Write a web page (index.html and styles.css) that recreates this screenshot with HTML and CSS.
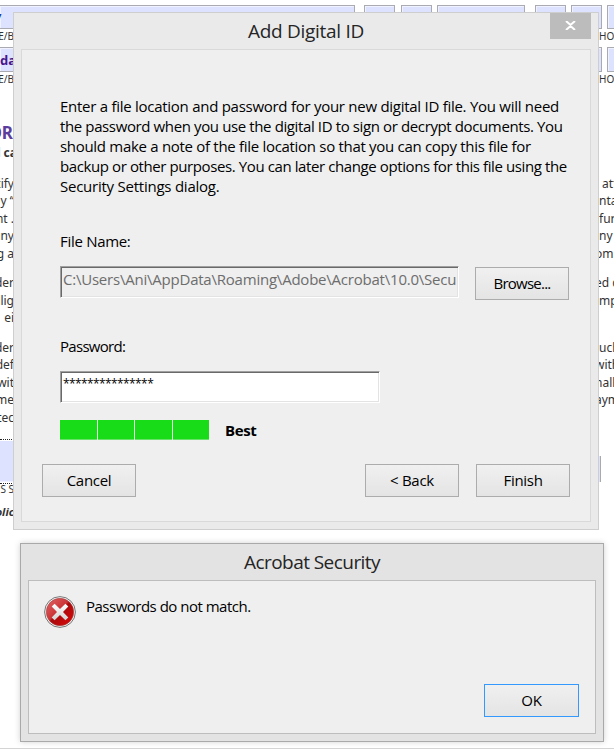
FILE: index.html
```html
<!DOCTYPE html>
<html lang="en">
<head>
<meta charset="utf-8">
<title>Add Digital ID</title>
<link rel="stylesheet" href="styles.css">
</head>
<body>
<main class="desktop">
  <div class="document">
    <div class="fields fields-top">
      <div class="field wide"><b>y</b></div><div class="field f1"></div><div class="field f2"></div><div class="field f3"></div><div class="field f4"></div><div class="field f5"></div><div class="field f6"></div>
    </div>
    <div class="line caption"><span class="l">E/B</span><span class="r">HO</span></div>
    <div class="fields">
      <div class="field wide"><b>da</b></div><div class="field f1"></div><div class="field f2"></div><div class="field f3"></div><div class="field f4"></div><div class="field f5"></div><div class="field f6"></div>
    </div>
    <div class="line caption"><span class="l">E/B</span><span class="r">HO</span></div>
    <div class="line heading"><span class="l">OR</span></div>
    <div class="line strong"><span class="l lead">d ca</span></div>
    <div class="para first">
      <div class="line"><span class="l">tify</span><span class="r">&nbsp;att</span></div>
      <div class="line"><span class="l">y “</span><span class="r">ntai</span></div>
      <div class="line"><span class="l">nt .</span><span class="r">furt</span></div>
      <div class="line"><span class="l">any</span><span class="r">ny</span></div>
      <div class="line"><span class="l">g a</span><span class="r cut">omp</span></div>
    </div>
    <div class="para">
      <div class="line"><span class="l">der</span><span class="r cut">ed c</span></div>
      <div class="line"><span class="l">lig</span><span class="r">mpl</span></div>
      <div class="line"><span class="l ei">ei</span></div>
    </div>
    <div class="para">
      <div class="line"><span class="l">der</span><span class="r">uch</span></div>
      <div class="line"><span class="l">def</span><span class="r cut">with</span></div>
      <div class="line"><span class="l">wit</span><span class="r cut">hall</span></div>
      <div class="line"><span class="l">me</span><span class="r cut">aym</span></div>
      <div class="line"><span class="l">tec</span></div>
    </div>
    <div class="signature"><div class="sign-left"></div><div class="sign-right"></div></div>
    <div class="line caption sign-caption"><span class="l">S S</span></div>
    <div class="line strong italic"><span class="l">olic</span></div>
  </div>

  <section class="window id-window">
    <header class="title">Add Digital ID</header>
    <button class="close" aria-label="Close"><svg width="11" height="9" viewBox="0 0 11 9"><path d="M1 0 5.500 4 10 0M1 9 5.500 5 10 9M5.500 3.500v2" fill="none" stroke="#fff" stroke-width="2"/></svg></button>
    <div class="panel id-panel">
      <p class="intro"><span class="t1">Enter a file location and password for your new digital ID file. You will need</span><span class="t2">the password when you use the digital ID to sign or decrypt documents. You</span><span class="t3">should make a note of the file location so that you can copy this file for</span><span class="t4">backup or other purposes. You can later change options for this file using the</span><span class="t5">Security Settings dialog.</span></p>
      <div class="label name-label">File Name:</div>
      <div class="file-row"><div class="input disabled"><span class="path">C:\Users\Ani\AppData\Roaming\Adobe\Acrobat\10.0\Secu</span></div><button class="btn browse">Browse...</button></div>
      <div class="label pass-label">Password:</div>
      <div class="input pass"><span>***************</span></div>
      <div class="strength"><div class="meter"><i></i><i></i><i></i><i></i></div><b>Best</b></div>
      <footer class="actions"><button class="btn">Cancel</button><button class="btn back">&lt; Back</button><button class="btn">Finish</button></footer>
    </div>
  </section>

  <section class="window alert-window">
    <header class="title">Acrobat Security</header>
    <div class="panel alert-panel">
      <div class="message">
        <svg width="32" height="32" viewBox="0 0 32 32">
          <defs>
            <linearGradient id="red" x1="0" y1="0" x2="1" y2="1"><stop offset="0" stop-color="#e0686a"/><stop offset=".45" stop-color="#cc3436"/><stop offset=".5" stop-color="#a90a0c"/><stop offset="1" stop-color="#e00808"/></linearGradient>
            <linearGradient id="white" x1="0" y1="0" x2="0" y2="1"><stop offset="0" stop-color="#fff"/><stop offset="1" stop-color="#d2d2d2"/></linearGradient>
          </defs>
          <circle cx="16" cy="16" r="15.400" fill="#f4f4f4" stroke="#777" stroke-width="1"/>
          <circle cx="16" cy="16" r="13.700" fill="url(#red)" stroke="#9d4141" stroke-width=".6"/>
          <path d="M10.600 7.800 16 13.100l5.400-5.300 2.900 2.800L19 16l5.300 5.400-2.900 2.800L16 18.900l-5.400 5.300-2.900-2.800L13 16l-5.300-5.400z" fill="url(#white)"/>
        </svg>
        <span>Passwords do not match.</span>
      </div>
      <button class="btn ok">OK</button>
    </div>
  </section>
</main>
</body>
</html>
```
FILE: styles.css
```css
* { box-sizing: border-box; }
body { margin: 0; background: #fff; color: #000; font: 15px/20px "Open Sans", "Noto Sans", sans-serif; }
.desktop { position: relative; width: 614px; height: 749px; overflow: hidden; border-bottom: 1px solid #d4d4d4; }

.document { padding-top: 5px; font: 12px/17.6px "Noto Sans", sans-serif; color: #333; }
.fields { display: flex; height: 25px; }
.fields-top { height: 24px; }
.field { flex: none; border: 1px solid #aaaab2; background: #dde2ff; width: 31px; box-shadow: inset 1px 1px #f0f2ff; }
.wide { width: 355px; border-left: 0; color: #4a168c; font-size: 13px; line-height: 24px; }
.fields-top .wide { color: #2638a8; line-height: 20px; }
.fields-top .wide b { margin-left: -6px; }
.f1 { margin-left: 9px; }
.f2 { margin-left: 6px; }
.f3 { margin-left: 5px; width: 88px; }
.f4 { margin-left: 10px; }
.f5 { margin-left: 5px; }
.f6 { margin-left: 5px; }
.line { display: flex; justify-content: space-between; height: 17.500px; white-space: nowrap; }
.l { display: flex; justify-content: flex-end; width: 14px; }
.lead { width: 17px; }
.r { width: 15px; overflow: hidden; }
.cut { text-indent: -4px; }
.caption { height: 18px; font-size: 10px; line-height: 14px; }
.heading { height: 22px; margin-top: 32px; color: #5c3c9c; font-size: 17px; line-height: 22px; font-weight: 700; }
.heading .l { width: 13px; }
.strong { font-weight: 700; }
.first { margin-top: 13px; }
.para + .para { margin-top: 12px; }
.signature { display: flex; justify-content: space-between; align-items: flex-end; height: 45px; margin-top: 13px; }
.sign-left { width: 14px; height: 45px; border-top: 1px dotted #222; border-bottom: 1px dotted #222; background: linear-gradient(#fff 1px, #dde2ff 1px, #dde2ff 41px, #fff 42px); }
.sign-right { width: 15px; height: 26px; margin-bottom: 2px; background: linear-gradient(90deg, #dde2ff 1px, #aaa 1px, #aaa 2px, #fff 2px); }
.sign-caption { height: 19px; line-height: 10px; }
.italic { font-style: italic; font-size: 11px; }

.window { position: absolute; border: 1px solid; }
.id-window { left: 13px; top: 12px; width: 586px; height: 518px; padding: 0 7px; background: #eaeaea; border-color: #cecece; }
.alert-window { left: 20px; top: 543px; width: 584px; height: 199px; padding: 0 7px; background: #e3e3e3; border-color: #a9a9a9; box-shadow: 0 0 6px rgba(0,0,0,.18); }
.title { height: 36px; color: #252525; text-align: center; font-size: 19px; line-height: 37px; letter-spacing: -.3px; }
.alert-window .title { letter-spacing: -.55px; }
.close { position: absolute; top: 0; right: 7px; width: 41px; height: 26px; display: flex; align-items: center; justify-content: center; padding: 0 0 2px; border: 0; background: #bcbcbc; }
.panel { border: 1px solid #d9d9d9; background: #efefef; }
.id-panel { height: 473px; padding: 46px 20px 0; }
.alert-panel { display: flex; flex-direction: column; justify-content: space-between; height: 154px; padding: 15px 16px 16px 15px; border-color: #bdbdbd; }
.intro { margin: 0 0 0 18px; height: 100px; white-space: nowrap; letter-spacing: -.3px; }
.intro span { display: block; width: max-content; }
.t1 { letter-spacing: -.27px; }
.t2 { letter-spacing: -.38px; }
.t4 { letter-spacing: -.4px; }
.t5 { letter-spacing: -.24px; }
.label { margin-left: 18px; height: 20px; letter-spacing: -.3px; }
.name-label { margin-top: 35px; }
.file-row { display: flex; justify-content: space-between; margin: 15px 1px 0 18px; }
.input { width: 399px; height: 32px; padding: 2px 1px; border: 1px solid; border-color: #a0a0a0 #fff #fff #a0a0a0; box-shadow: inset 1px 1px #696969, inset -1px -1px #e3e3e3; background: #fff; white-space: nowrap; }
.disabled { background: #efefef; color: #6d6d6d; overflow: hidden; letter-spacing: -.22px; padding-left: 2px; }
.btn { flex: none; width: 94px; height: 33px; padding: 0 0 2px; border: 1px solid #acacac; background: linear-gradient(#f0f0f0, #e4e4e4); color: #000; font: inherit; letter-spacing: -.3px; }
.browse { letter-spacing: -.75px; }
.file-row .btn { margin-top: 1px; }
.pass-label { margin-top: 36px; letter-spacing: -.7px; }
.pass { width: 320px; margin: 15px 0 0 18px; padding-left: 2px; font-size: 12px; letter-spacing: -.6px; }
.strength { display: flex; align-items: center; gap: 16px; height: 20px; margin: 17px 0 0 18px; letter-spacing: -.4px; }
.meter { display: flex; gap: 1px; width: 149px; height: 20px; background: #e3f7e3; }
.meter i { flex: 1; background: #19dc19; border-bottom: 1px solid #69e269; }
.actions { display: flex; margin-top: 24px; }
.back { margin: 0 17px 0 auto; }
.message { display: flex; gap: 10px; height: 32px; letter-spacing: -.5px; }
.ok { width: 95px; align-self: flex-end; border-color: #3399ff; }
```
